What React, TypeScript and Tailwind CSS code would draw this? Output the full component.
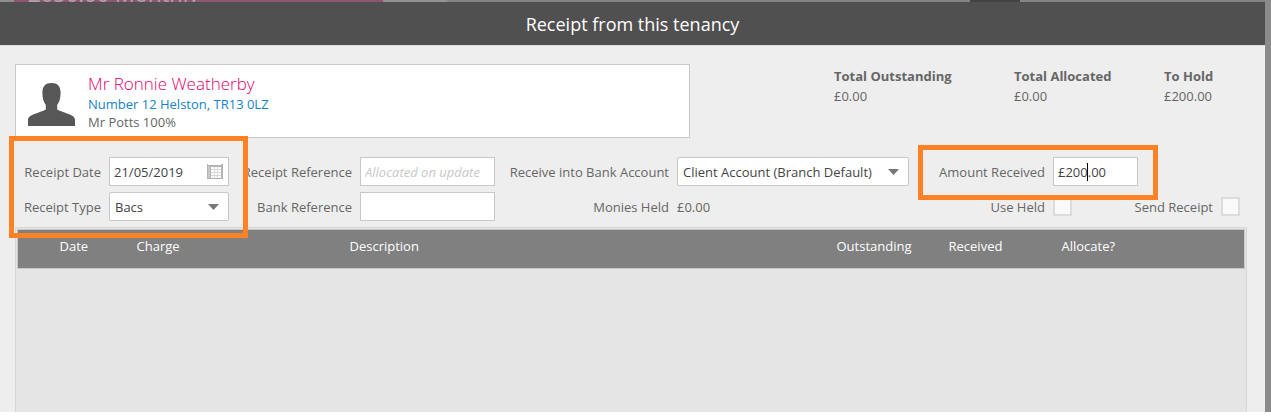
import React from "react";

interface TotalProps {
  label: string;
  value: string;
  className: string;
}

const labelClass = "flex items-center justify-end whitespace-nowrap";
const fieldClass = "h-[29px] w-full border border-[#c8c8c8] bg-white px-1 text-[#444] outline-none";

const columns = [
  { title: "", width: "w-[42px]" },
  { title: "Date", width: "w-[77px]" },
  { title: "Charge", width: "w-[213px]" },
  { title: "Description", width: "" },
  { title: "Outstanding", width: "w-[112px]" },
  { title: "Received", width: "w-[113px]" },
  { title: "Allocate?", width: "w-[183px]" }
];

function Total({ label, value, className }: TotalProps) {
  return (
    <div className={className}>
      <dt className="font-bold">{label}</dt>
      <dd>{value}</dd>
    </div>
  );
}

function PersonIcon() {
  return (
    <svg className="mt-[18px] h-[43px] w-[47px] shrink-0" viewBox="0 0 47 43" fill="#575757" aria-hidden="true">
      <path d="M23.500 0C17.500 0 14.400 3 14.400 10C14.400 15 15.500 19 17.800 22V26.500C15 28 10 29.500 6.500 31C2.500 32.500 0 34 0 37V43H47V37C47 34 44.500 32.500 40.500 31C37 29.500 32 28 29.200 26.500V22C31.500 19 32.600 15 32.600 10C32.600 3 29.500 0 23.500 0Z" />
    </svg>
  );
}

function CalendarIcon() {
  return (
    <svg className="h-[15px] w-4" viewBox="0 0 16 15" aria-hidden="true">
      <path d="M0 0H1V1H14V0H16V15H0Z" fill="#b4b4b4" />
      <path d="M4 3H14V14H4Z" fill="#fff" />
      <path d="M1 2V14H3V2Z" fill="#c8c8c8" />
      <path d="M7.500 3V14M10.500 3V14M4 5.500H14M4 8.500H14M4 11.500H14" stroke="#dadada" fill="none" />
    </svg>
  );
}

function Arrow() {
  return (
    <svg className="pointer-events-none absolute top-3 right-[10px] h-[6px] w-[11px]" viewBox="0 0 11 6" aria-hidden="true">
      <path d="M0 0H11L5.500 6Z" fill="#777" />
    </svg>
  );
}

function Select({ id, value }: { id: string; value: string }) {
  return (
    <div className="relative">
      <select id={id} className={`${fieldClass} appearance-none rounded-[2px] px-[5px]`}>
        <option>{value}</option>
      </select>
      <Arrow />
    </div>
  );
}

function Checkbox({ id }: { id: string }) {
  return (
    <input
      id={id}
      type="checkbox"
      className="h-[19px] w-[19px] appearance-none self-center border-2 border-[#dcdcdc] bg-[#f9f9f9] checked:bg-[#777]"
    />
  );
}

export default function App() {
  return (
    <div className="overflow-hidden bg-[#8b8b8b] pr-[6px] font-['Open_Sans','Noto_Sans',sans-serif] text-[13px] leading-5 text-[#666]">
      <div className="flex h-[2px] overflow-hidden bg-[#858585]">
        <div className="w-[14px] bg-[#8f8f8f]" />
        <div className="w-[369px] bg-[#8f5674] pl-[14px]">
          <div className="-mt-[19px] text-[22px] leading-6 text-[#b3a0aa]">£650.00 Monthly</div>
        </div>
        <div className="w-[64px] bg-[#929292]" />
        <div className="flex-1" />
        <div className="mr-[245px] w-[50px] bg-[#424242]" />
      </div>

      <main className="bg-[#eee]">
        <header className="flex h-11 items-center justify-center border-b border-[#ddd] bg-[#505050]">
          <h1 className="text-lg text-white">Receipt from this tenancy</h1>
        </header>

        <section className="flex pt-[18px] pl-[15px]">
          <div className="flex h-[74px] min-w-0 flex-1 border border-[#c8c8c8] bg-white pl-3">
            <PersonIcon />
            <div className="ml-[13px] pt-2">
              <div className="text-[17px] leading-[22px] font-light text-[#e0006a]">Mr Ronnie Weatherby</div>
              <div className="leading-[18px] text-[#1583c7]">Number 12 Helston, TR13 0LZ</div>
              <div className="leading-[18px]">Mr Potts 100%</div>
            </div>
          </div>
          <dl className="ml-36 flex pt-[2px]">
            <Total label="Total Outstanding" value="£0.00" className="w-[180px]" />
            <Total label="Total Allocated" value="£0.00" className="w-[150px]" />
            <Total label="To Hold" value="£200.00" className="w-[101px]" />
          </dl>
        </section>

        <form className="relative mt-[19px] grid grid-cols-[86px_120px_minmax(0,115fr)_135px_minmax(0,166fr)_232px_minmax(0,128fr)_85px_minmax(0,67fr)_20px] grid-rows-[29px_29px] gap-x-2 gap-y-[6px] pr-6 pl-[15px]">
          <label htmlFor="receipt-date" className={labelClass}>Receipt Date</label>
          <div className="relative">
            <input id="receipt-date" type="text" defaultValue="21/05/2019" className={fieldClass} />
            <button type="button" aria-label="Open calendar" className="absolute top-[7px] right-[6px]">
              <CalendarIcon />
            </button>
          </div>
          <label htmlFor="receipt-reference" className={labelClass}>Receipt Reference</label>
          <input
            id="receipt-reference"
            type="text"
            placeholder="Allocated on update"
            className={`${fieldClass} placeholder:text-[#c8c8c8] placeholder:italic`}
          />
          <label htmlFor="bank-account" className={labelClass}>Receive into Bank Account</label>
          <Select id="bank-account" value="Client Account (Branch Default)" />
          <label htmlFor="amount-received" className={labelClass}>Amount Received</label>
          <div className="relative">
            <input id="amount-received" type="text" defaultValue="£200.00" className={fieldClass} />
            <span className="pointer-events-none absolute top-[6px] left-[34px] h-[18px] w-px bg-black" />
          </div>

          <label htmlFor="receipt-type" className={`${labelClass} col-start-1`}>Receipt Type</label>
          <Select id="receipt-type" value="Bacs" />
          <label htmlFor="bank-reference" className={labelClass}>Bank Reference</label>
          <input id="bank-reference" type="text" className={fieldClass} />
          <span className={labelClass}>Monies Held</span>
          <span className="flex items-center">£0.00</span>
          <label htmlFor="use-held" className={labelClass}>Use Held</label>
          <Checkbox id="use-held" />
          <label htmlFor="send-receipt" className={labelClass}>Send Receipt</label>
          <Checkbox id="send-receipt" />

          {/* highlight frames, each anchored to the grid cells it surrounds */}
          <div className="pointer-events-none absolute -top-[21px] -right-[19px] -bottom-[17px] -left-[6px] z-10 col-span-2 col-start-1 row-span-2 row-start-1 border-[5px] border-[#ff8126]" />
          <div className="pointer-events-none absolute -top-3 -right-5 -bottom-[14px] left-px z-10 col-span-2 col-start-7 row-span-1 row-start-1 border-[5px] border-[#ff8126]" />
        </form>

        <div className="mt-[6px] mr-[18px] ml-[15px] border border-b-0 border-[#d6d6d6] bg-[#e5e5e5] px-px pt-px">
          <table className="w-full table-fixed border-collapse text-left">
            <thead>
              <tr className="h-[39px] border border-[#c8c8c8] bg-[#808080] text-white">
                {columns.map((column) => (
                  <th key={column.title} className={`${column.width} p-0 pb-[6px] font-normal`}>
                    {column.title}
                  </th>
                ))}
              </tr>
            </thead>
            <tbody>
              <tr>
                <td colSpan={7} className="h-[143px] p-0" />
              </tr>
            </tbody>
          </table>
        </div>
      </main>
    </div>
  );
}
